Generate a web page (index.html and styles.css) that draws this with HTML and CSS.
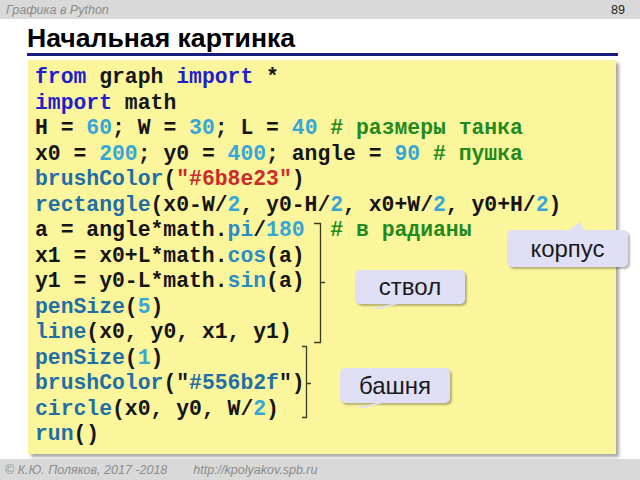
FILE: index.html
```html
<!DOCTYPE html>
<html lang="ru">
<head>
<meta charset="utf-8">
<title>Начальная картинка</title>
<link rel="stylesheet" href="styles.css">
</head>
<body>
<div class="page">
  <header class="topbar">
    <span class="topic">Графика в Python</span>
    <span class="pagenum">89</span>
  </header>
  <main class="main">
    <h1 class="title">Начальная картинка</h1>
    <div class="codebox">
<pre class="code"><span class="k">from</span> graph <span class="k">import</span> *
<span class="k">import</span> math
H = <span class="n">60</span>; W = <span class="n">30</span>; L = <span class="n">40</span> <span class="c"># размеры танка</span>
x0 = <span class="n">200</span>; y0 = <span class="n">400</span>; angle = <span class="n">90</span> <span class="c"># пушка</span>
<span class="f">brushColor</span>(<span class="s">"#6b8e23"</span>)
<span class="f">rectangle</span>(x0-W/<span class="n">2</span>, y0-H/<span class="n">2</span>, x0+W/<span class="n">2</span>, y0+H/<span class="n">2</span>)
a = angle*math.<span class="m">pi</span>/<span class="n">180</span>  <span class="c"># в радианы</span>
x1 = x0+L*math.<span class="m">cos</span>(a)
y1 = y0-L*math.<span class="m">sin</span>(a)
<span class="f">penSize</span>(<span class="n">5</span>)
<span class="f">line</span>(x0, y0, x1, y1)
<span class="f">penSize</span>(<span class="n">1</span>)
<span class="f">brushColor</span>("<span class="f">#556b2f</span>")
<span class="f">circle</span>(x0, y0, W/<span class="n">2</span>)
<span class="f">run</span>()</pre>
      <svg class="brackets" width="588" height="394" viewBox="0 0 588 394">
        <path d="M286 163.5 H292.5 V282.5 H286 M292.5 222.5 H297" />
        <path d="M274 286.5 H278.5 V357.5 H274 M278.5 323.5 H283" />
      </svg>
      <div class="callout callout-up korpus">корпус</div>
      <div class="callout callout-down stvol">ствол</div>
      <div class="callout callout-down bashnya">башня</div>
    </div>
  </main>
  <footer class="bottombar">
    <span class="copy">© К.Ю. Поляков, 2017 -2018</span>
    <span class="url">http://kpolyakov.spb.ru</span>
  </footer>
</div>
</body>
</html>
```

FILE: styles.css
```css
html, body {
  margin: 0;
  padding: 0;
  background: #ffffff;
}

.page {
  width: 640px;
  height: 480px;
  display: flex;
  flex-direction: column;
  overflow: hidden;
  font-family: "Liberation Sans", Arial, sans-serif;
}

.topbar {
  height: 19px;
  background: #d9d9d9;
  display: flex;
  align-items: center;
  justify-content: space-between;
  padding: 0 15px 0 6px;
  flex-shrink: 0;
}

.topic {
  font-style: italic;
  font-size: 12.5px;
  color: #8c8c8c;
}

.pagenum {
  font-size: 12.5px;
  color: #222;
}

.main {
  flex: 1;
  padding-left: 27px;
  padding-right: 22px;
}

.title {
  margin: 4px 0 0 0;
  font-size: 26.6px;
  line-height: 30px;
  font-weight: bold;
  color: #000;
  border-bottom: 3px solid #1c1c80;
  height: 30px;
}

.codebox {
  position: relative;
  margin: 4px 0 0 1px;
  width: 588px;
  height: 394px;
  background: #fbf69c;
  box-shadow: 3px 3px 3px rgba(0, 0, 0, 0.35);
  box-sizing: border-box;
}

.code {
  margin: 0;
  padding: 5px 0 0 7px;
  font-family: "Liberation Mono", "Courier New", monospace;
  font-weight: bold;
  font-size: 21.4px;
  line-height: 25.5px;
  color: #151515;
}

.k { color: #1f1fcc; }
.n { color: #36a6d8; }
.f { color: #1f6fa6; }
.m { color: #2a8cc2; }
.s { color: #cc2b2b; }
.c { color: #1f8a1f; }

.brackets {
  position: absolute;
  left: 0;
  top: 0;
  pointer-events: none;
}

.brackets path {
  fill: none;
  stroke: #3b3a22;
  stroke-width: 1.3;
}

.callout {
  position: absolute;
  background: #dfe0f6;
  border-radius: 5px;
  box-shadow: 2px 2px 2px rgba(0, 0, 0, 0.28);
  font-family: "Liberation Sans", Arial, sans-serif;
  font-size: 24px;
  color: #1a1a1a;
  display: flex;
  align-items: center;
  justify-content: center;
}

.callout::before {
  content: "";
  position: absolute;
  background: #dfe0f6;
}

.callout-up::before {
  width: 16px;
  height: 9px;
  left: 61px;
  top: -8px;
  clip-path: polygon(0 100%, 75% 0, 100% 100%);
}

.callout-down::before {
  width: 30px;
  height: 6px;
  left: 16px;
  bottom: -5px;
  clip-path: polygon(0 100%, 82% 0, 100% 0, 30% 100%);
}

.korpus {
  left: 479px;
  top: 170px;
  width: 121px;
  height: 37px;
}

.stvol {
  left: 327px;
  top: 210px;
  width: 110px;
  height: 34px;
}

.bashnya {
  left: 312px;
  top: 308px;
  width: 110px;
  height: 35px;
}

.bottombar {
  height: 21px;
  background: #d9d9d9;
  display: flex;
  align-items: center;
  gap: 26px;
  padding-left: 5px;
  flex-shrink: 0;
  margin-top: auto;
}

.copy, .url {
  font-style: italic;
  font-size: 12.5px;
  color: #8c8c8c;
}
```
